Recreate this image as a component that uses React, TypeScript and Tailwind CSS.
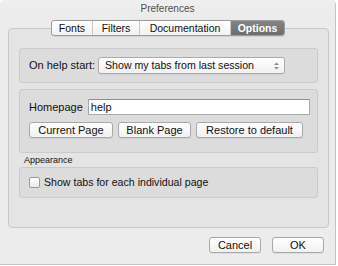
import React from "react";

const font = { fontFamily: '"Liberation Sans", Arial, sans-serif' };

function Btn({ w, children }: { w: string; children: React.ReactNode }) {
  return (
    <div
      className={`${w} h-[16px] flex items-center justify-center rounded-[3px] border border-[#a9a9a9] bg-gradient-to-b from-[#ffffff] to-[#f1f1f1] shadow-[0_1px_0_rgba(0,0,0,0.06)] text-[11px] text-[#111111] leading-none`}
    >
      {children}
    </div>
  );
}

function Tab({ w, label, selected, last }: { w: string; label: string; selected?: boolean; last?: boolean }) {
  return (
    <div
      className={`${w} h-full flex items-center justify-center text-[10.5px] leading-none ${
        selected
          ? "bg-gradient-to-b from-[#858585] to-[#6c6c6c] text-white font-bold"
          : "text-[#111111]"
      } ${last ? "" : "border-r border-[#c9c9c9]"}`}
    >
      {label}
    </div>
  );
}

export default function App() {
  return (
    <div className="w-[338px] h-[266px] bg-white" style={font}>
      <div className="w-[336px] h-[265px] bg-[#ececec] rounded-t-[5px] border-r border-b border-[#c2c2c2] flex flex-col">
        <div className="h-[20px] flex items-center justify-center text-[10px] text-[#4f4f4f] leading-none pb-[2px] bg-gradient-to-b from-[#efefef] to-[#ebebeb] rounded-t-[5px]">
          Preferences
        </div>
        <div className="flex justify-center relative z-10 pl-[1px]">
          <div className="h-[16px] flex rounded-[3px] border border-[#9c9c9c] bg-gradient-to-b from-[#ffffff] to-[#f2f2f2] overflow-hidden shadow-[0_1px_0_rgba(0,0,0,0.08)]">
            <Tab w="w-[41px]" label="Fonts" />
            <Tab w="w-[47px]" label="Filters" />
            <Tab w="w-[91px]" label="Documentation" />
            <Tab w="w-[53px]" label="Options" selected last />
          </div>
        </div>
        <div className="ml-[8px] w-[321px] h-[200px] -mt-[8px] rounded-[4px] border border-[#c8c8c8] bg-[#e4e4e4] pt-[19px] px-[10px] flex flex-col">
          <div className="h-[35px] rounded-[3px] border border-[#cbcbcb] bg-[#dcdcdc] flex items-center pl-[9px] gap-[3px]">
            <span className="text-[11px] text-[#111111] leading-none">On help start:</span>
            <div className="w-[187px] h-[17px] rounded-[3px] border border-[#ababab] bg-gradient-to-b from-[#ffffff] to-[#f1f1f1] flex items-center pl-[6px] pr-[4px] shadow-[0_1px_0_rgba(0,0,0,0.06)]">
              <span className="text-[10.6px] text-[#111111] leading-none flex-1">Show my tabs from last session</span>
              <svg width="7" height="10" viewBox="0 0 7 10">
                <path d="M1 4 L3.5 1.5 L6 4 Z" fill="#8a8a8a" />
                <path d="M1 6 L3.5 8.5 L6 6 Z" fill="#8a8a8a" />
              </svg>
            </div>
          </div>
          <div className="mt-[6px] h-[64px] rounded-[3px] border border-[#cbcbcb] bg-[#dcdcdc] pt-[9px] pl-[9px] flex flex-col">
            <div className="flex items-center gap-[5px]">
              <span className="text-[11px] text-[#111111] leading-none">Homepage</span>
              <div className="w-[222px] h-[16px] bg-white border border-[#a9a9a9] border-t-[#8f8f8f] flex items-center pl-[2px] text-[11px] text-[#111] leading-none">
                help
              </div>
            </div>
            <div className="mt-[7px] flex gap-[5px]">
              <Btn w="w-[84px]">Current Page</Btn>
              <Btn w="w-[73px]">Blank Page</Btn>
              <Btn w="w-[107px]">Restore to default</Btn>
            </div>
          </div>
          <div className="h-[14px] flex items-center pl-[5px] text-[9px] text-[#111111] leading-none pt-[1px]">
            Appearance
          </div>
          <div className="h-[31px] rounded-[3px] border border-[#cbcbcb] bg-[#dcdcdc] flex items-center pl-[9px] gap-[4px]">
            <div className="w-[11px] h-[11px] rounded-[2px] border border-[#9a9a9a] bg-gradient-to-b from-[#ffffff] to-[#ececec]" />
            <span className="text-[10.6px] text-[#111111] leading-none">Show tabs for each individual page</span>
          </div>
        </div>
        <div className="mt-[9px] flex justify-end gap-[11px] pr-[11px]">
          <Btn w="w-[52px]">Cancel</Btn>
          <Btn w="w-[52px]">OK</Btn>
        </div>
      </div>
    </div>
  );
}
